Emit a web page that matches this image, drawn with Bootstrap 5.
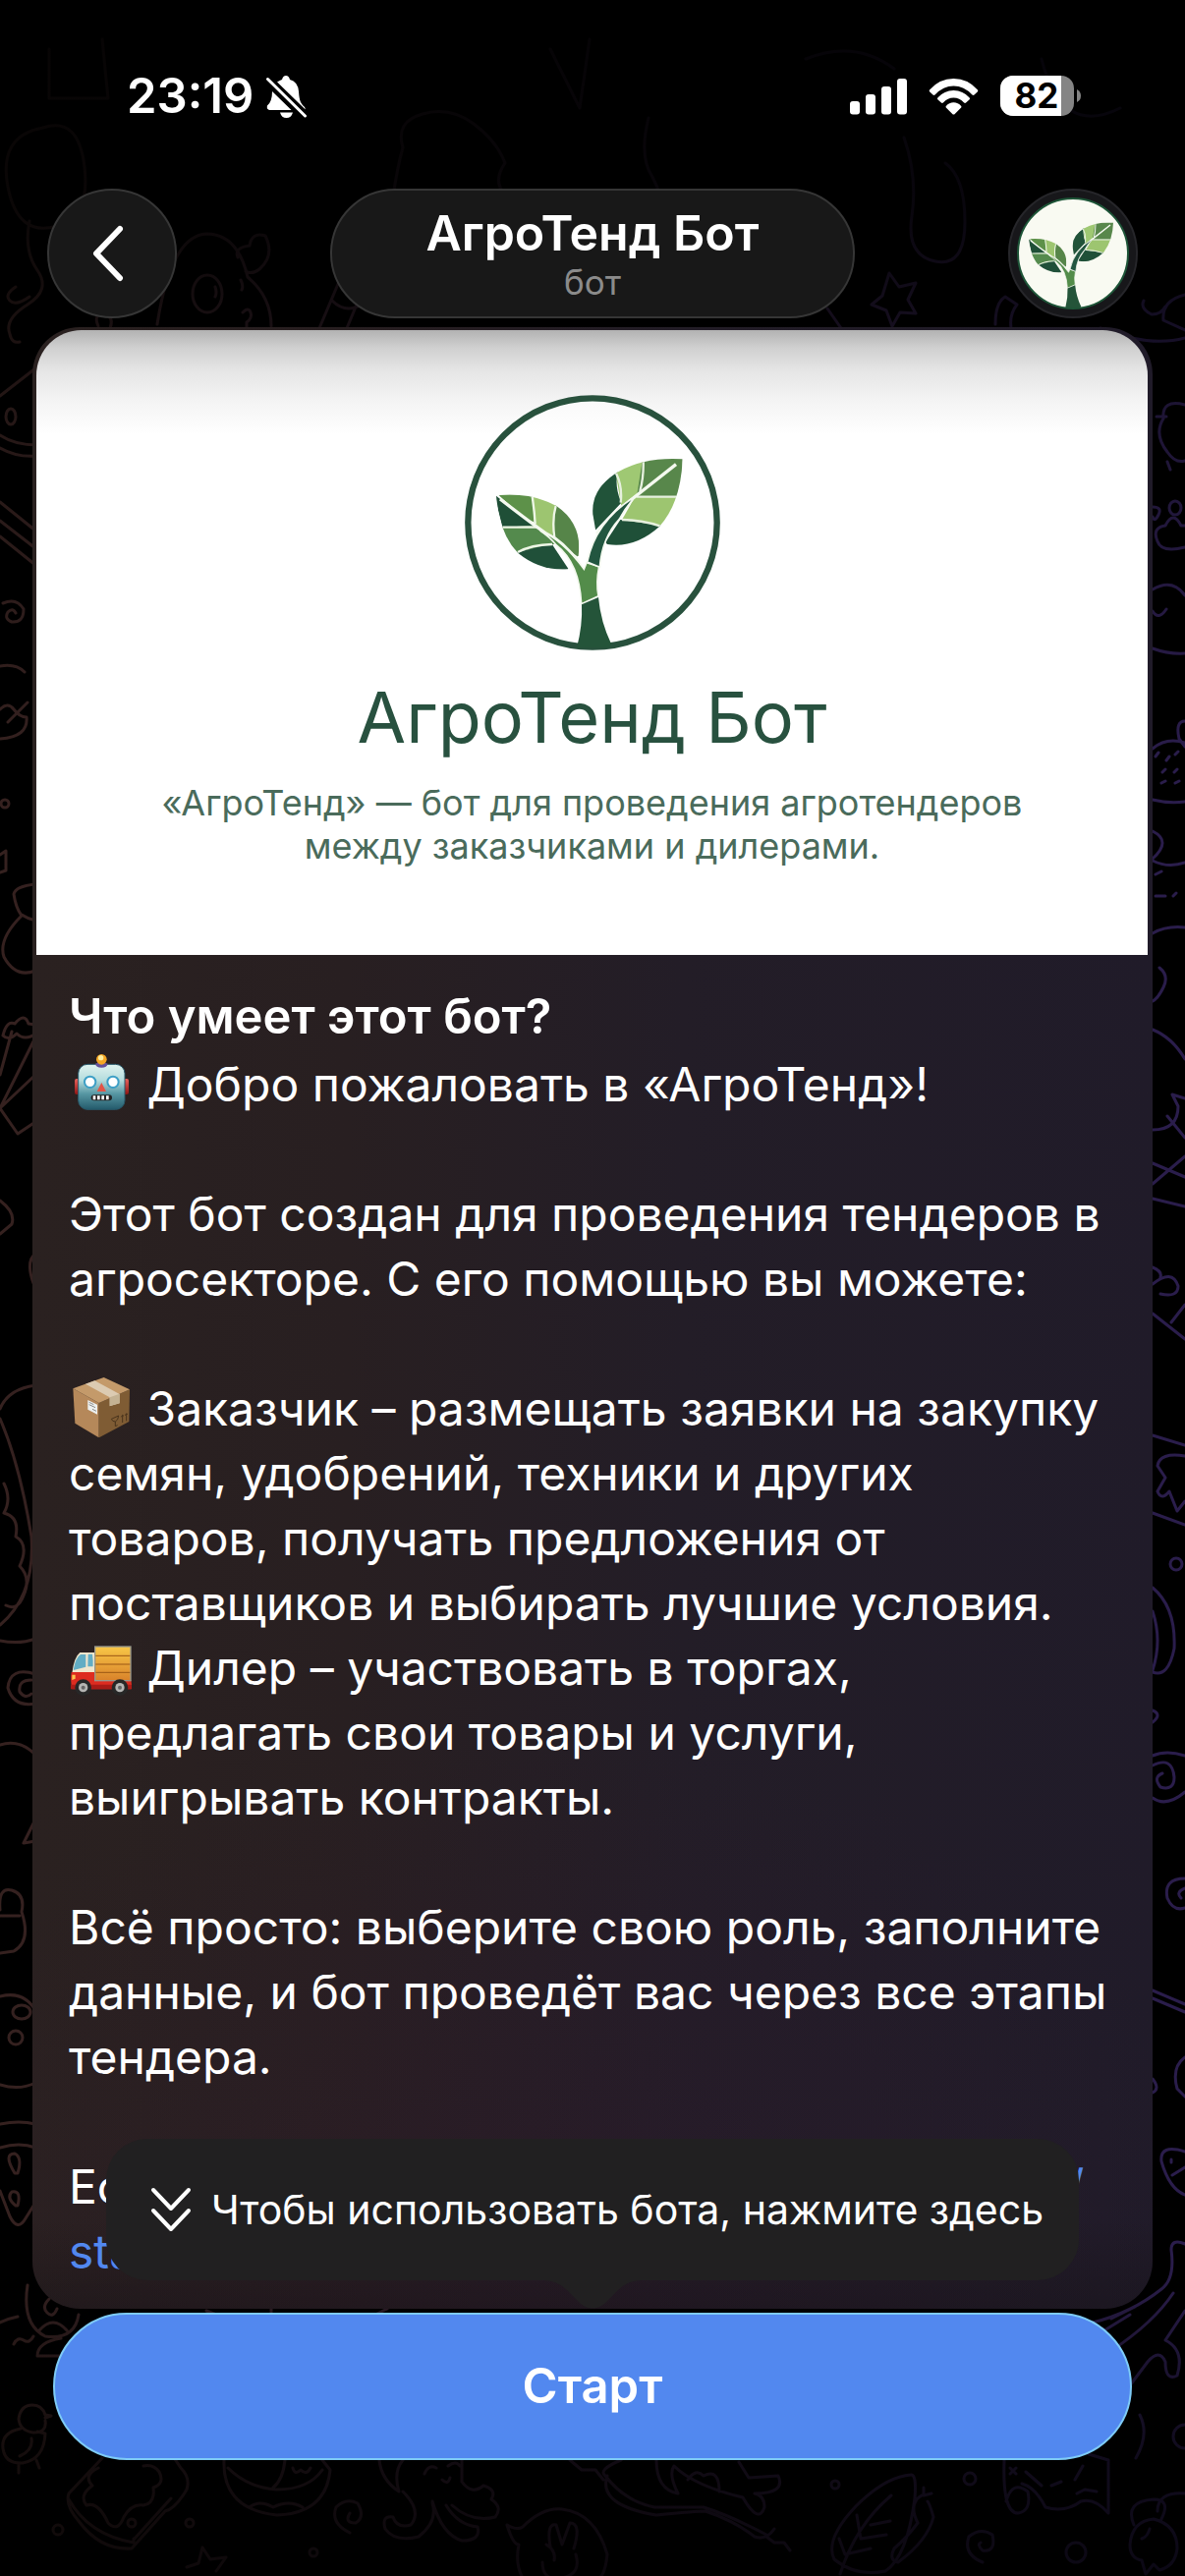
<!DOCTYPE html>
<html lang="ru" data-bs-theme="dark">
<head>
<meta charset="utf-8">
<meta name="viewport" content="width=device-width, initial-scale=1">
<title>АгроТенд Бот</title>
<link href="https://cdn.jsdelivr.net/npm/bootstrap@5.3.0/dist/css/bootstrap.min.css" rel="stylesheet">
<style>
  body { background: #000; color: #fff; font-family: Inter, "Noto Sans", sans-serif; font-size: 48px; line-height: 66px; }
  svg { display: block; flex: none; }
  .wallpaper { position: absolute; top: 0; left: 0; width: 100%; height: 100%; fill: none; stroke-width: 3; stroke-linecap: round; stroke-linejoin: round; }

  .status-row { padding: 68px 106px 64px 129px; font-size: 49px; line-height: 60px; }
  .status-icons { gap: 22px; }
  .clock { gap: 12px; }

  .chat-head { padding: 0 48px; height: 132px; }
  .glass { background: #181818; border: 2px solid #363636; }
  .glass:hover { background: #222; }
  .round-btn { width: 132px; height: 132px; }
  .avatar { border-color: #26262a; background: #17171a; }
  .title-pill { width: 534px; }
  .chat-title { font-size: 50px; line-height: 58px; }
  .chat-kind { font-size: 35px; line-height: 42px; color: #8b8b8b; }

  .intro { margin: 9px 33px 0; padding: 3px 5px 0 4px; border: 0; border-radius: 48px; color: #fff;
    background:
      linear-gradient(0deg, rgba(20, 16, 20, .4), transparent 90px),
      radial-gradient(700px 500px at 45% 96%, rgba(48, 22, 46, .3), transparent),
      linear-gradient(90deg, #2a2120, #281f21 28%, #231d27 58%, #201b29); }
  .poster { height: 636px; padding-top: 66px; border-radius: 46px 46px 0 0;
    background: linear-gradient(180deg, #b2b2b2, #d0d0d0 18px, #e6e6e6 42px, #f3f3f3 70px, #fff 106px); }
  .poster-title { font-size: 72px; line-height: 88px; margin: 24px 0 21px; color: #28513f; }
  .poster-text { font-size: 36px; line-height: 44px; color: #4a6b5b; }
  .intro-text { padding: 30px 30px 25px 33px; }
  .intro-text h2 { font-size: 49px; line-height: 66px; margin-bottom: 3px; color: #fff; }
  .intro-text p { margin-bottom: 66px; }
  .intro-text a { color: #5288ef; }
  .emoji { display: inline-block; width: 66px; height: 62px; vertical-align: -12px; }

  .start-bar { padding: 4px 54px 0; }
  .start-btn { height: 150px; font-size: 49px; color: #fff; background: #5288ef; border: 2px solid #7ecbf6; }
  .start-btn:hover { color: #fff; background: #4a7fe6; border-color: #7ecbf6; }
  .hint { position: absolute; bottom: calc(100% + 29px); left: 108px; right: 108px; height: 144px; padding: 0 36px 0 45px;
    gap: 20px; border-radius: 42px; font-size: 41px; background: #212021; }
  .hint-tail { position: absolute; top: 100%; left: 50%; margin-left: -50px; }
</style>
</head>
<body>
<div class="position-relative min-vh-100 overflow-hidden">

  <svg class="wallpaper" viewBox="0 0 1206 2622" preserveAspectRatio="xMidYMid slice" aria-hidden="true">
    <defs>
      <linearGradient id="ink" gradientUnits="userSpaceOnUse" x1="0" y1="0" x2="1206" y2="0">
        <stop offset="0" stop-color="#35211f"/><stop offset=".5" stop-color="#2b1b2e"/><stop offset="1" stop-color="#2a1d4c"/>
      </linearGradient>
      <linearGradient id="shade" x1="0" y1="0" x2="0" y2="1">
        <stop offset="0" stop-color="#000" stop-opacity=".88"/><stop offset=".08" stop-color="#000" stop-opacity=".8"/>
        <stop offset=".16" stop-color="#000" stop-opacity=".3"/><stop offset=".3" stop-color="#000" stop-opacity="0"/>
        <stop offset=".88" stop-color="#000" stop-opacity="0"/><stop offset=".95" stop-color="#000" stop-opacity=".6"/>
        <stop offset="1" stop-color="#000" stop-opacity=".72"/>
      </linearGradient>
    </defs>
    <g stroke="url(#ink)">
      <!-- top -->
      <path d="M44 130q36-12 42 40t-28 60q-40 12-50-40t36-60M30 225q-6 30 8 50t-10 35-18 30q2 10 10 8"/>
      <path d="M160 330q14-90 50-92 32 0 42 44 24 20 24 50M242 262q-4-10 12-12 2-14 16-10 10 20-6 34-8 6-14 2"/>
      <ellipse cx="211" cy="299" rx="15" ry="19"/><path d="M219 292q2 6 0 10M245 285q3 6 1 10M247 318q6-6 8 0t-4 10v8M325 334l22-52M353 334l10-24M338 306q12 12 26 6"/>
      <path d="M100 332q-6-14 8-12 8 4 4 14"/>
      <path d="M905 278l10 14 17-4-8 17 8 14-16-1-8 14-6-16-15-6 11-9zM1013 330q0-22 10-28l12 8q-8 10-6 24M842 314l14 20"/>
      <path d="M410 150q-8-26 20-34t52 10 32 40q-14 20 2 34-20 26-56 20-44 4-60-20 4-28 10-50M560 50l30 60 10-70M50 50v50h60l-6-60"/>
      <path d="M660 120q-10 40 4 60 16 30 6 60M920 140q14 40 8 80t24 46 30-40-20-60M820 60q50-20 90 10M1060 60q20 80 80 50"/>
      <!-- left edge -->
      <path d="M30 302q-14 10-20 4t6-14M0 403l36-28M0 443q15 10 38 10M0 456q18 10 38 8M0 511l36 29M0 530l36 28M0 546l36 29M0 678q16-3 25 6"/>
      <ellipse cx="11" cy="424" rx="5" ry="8"/>
      <path d="M3 614q14-6 21 6 0 14-12 13-8-3-4-10 5-5 8 1M0 722q8-8 14 0t13 8q2 20-27 22M8 735l20-20M0 870l6-4v20l-6 2"/>
      <circle cx="5" cy="818" r="4"/>
      <path d="M36 900q-20 2-22 10 2 14 8 22-24 24-18 42 12 22 32 14M36 937q-8-2-14-6"/>
      <path d="M3 1054q4-16 12-12 10-12 14 0 10 0 8 10-12 8-20 0-8 8-14 2M12 1050l-12 44M34 1060l-34 68M34 1096l-34 32 18 26 18-12M0 1222q16 12 12 24l-12 10M36 1276q-10 8-2 30"/>
      <path d="M36 1410q-28 4-36 24M0 1444q20 46 32 120 4 60-32 90M4 1510q8 16 0 30 16 4 12 24 14 8 4 30 12 12 4 30-6 16-18 10M0 1670q20 4 36-2"/>
      <path d="M36 1704q-26-8-28 14 6 20 28 16M32 1710q-14 0-12 12 6 8 12 2M0 1776q20-6 36 10M36 1852l-12 24 12-2M0 1944q-2-24 12-20 14 4 10 22 10 30-8 40l-14 2M0 1950h20"/>
      <path d="M0 2032q24-6 36 14M0 2122q20 6 36-2M0 2162q20-4 36 0M0 2186q20-6 36 0M0 2230l10 26q8 16 16 2l10-16"/>
      <path d="M15 2212q-12-20 0-20 8 4 3 20zM16 2245q-10-8-4-14 10-2 6 14z"/><ellipse cx="22" cy="2048" rx="9" ry="7"/><ellipse cx="16" cy="2074" rx="7" ry="7"/>
      <!-- right edge -->
      <path d="M1164 306q-4 8 8 14 10 0 14-8M1206 300q-24 6-22 26l22 10M1120 334q50 20 86 10"/>
      <path d="M1206 412q-24-6-22 14-10 16 4 34 8 12 18 9M1188 470l3 8M1177 424h10"/>
      <path d="M1178 551q-6-14 8-16 8-16 16 0h4M1178 551q4 12 28 6M1173 516q10 0 6 8t-6 2"/><ellipse cx="1196" cy="517" rx="6" ry="7"/>
      <path d="M1173 600q20-12 33 6M1173 622q6 10 14-2M1173 660q16 6 33 5M1173 762q14-12 33-6M1206 734q-10 0-6 18l6 8M1173 814q16 4 33 2M1179 766l-3 4M1190 770l-3 4M1186 783l-3 3M1198 783l-3 3M1182 797l4-2M1196 797l4-2M1196 768l3-3"/>
      <path d="M1173 846q20 10 0 28M1173 876q16 8 33 2M1176 912h10M1176 890l6-3M1194 912l3-3M1173 950q14-8 33-6M1180 985q10 8 4 20t-11 14M1173 1048q20 8 33 30M1173 1150q26 0 26-24l-6-12 13 4M1188 1136l18 22M1173 1205l33-28M1173 1184l33 14M1173 1220l33 8M1173 1290q10 4 8 10"/>
      <path d="M1173 1307q20-16 26 2 0 12-18 8M1173 1337l33 26M1192 1346l14-18M1173 1461l33 10M1173 1540l33 12M1206 1482q-26-4-28 10l8 12-8 14q4 10 12 0l8 20 8-10"/>
      <circle cx="1197" cy="1592" r="6"/><path d="M1173 1616q24 20 22 62-6 30-22 24M1173 1640q10 30 0 60M1173 1741q10 4 0 12M1173 1787q14-6 33 0M1173 1830q14 10 33-6M1173 1797q20-10 22 12 0 14-14 10-8-10 2-14"/>
      <path d="M1206 1912q-22 0-18 20 6 14 18 10M1206 1922q-10 4-4 10M1173 2026l33 14M1173 2034l33 14M1206 2094q-14 10-8 32l8 8M1173 2116q8 10 0 14M1206 2190q-26-8-24 10 8 28 24 34M1192 2198v3M1193 2214l13-8"/>
      <path d="M1206 2284q-14-6-14 6 4 30-10 40-30 24-70 34-20 0-10 16 14 10 20-10M1194 2334q-20 30-62 58M1206 2352l-20 30q20 10 12 36-12 6-12-14-6-14-18 0l-18 24M1155 2348l-24 12"/>
      <!-- bottom -->
      <path d="M0 2364q8-4 18-6M28 2326q-6 40 18 52 30 4 34-22M50 2340q-8 8-2 14t10-4M40 2372q14-16 28 0M14 2386q4-8 10-4t10-4M62 2380q-24 4-24 18h26M210 2352l10 4M276 2350v6M382 2356l12-6M1150 2356l-26 16"/>
      <path d="M46 2464q2 12-12 12-14-2-15-14 2-14 14-14 10 0 13 10l6 1-6 2M21 2472q-20 4-18 20t20 15q22-4 23-30l-8-2M32 2482q2 12-12 18M19 2508v9M37 2504l3 8"/>
      <path d="M104 2502l-34 36q-4 12 10 28 22 30 54 28l34-38q10-2 22-22 4-12-6-22l-8-12M70 2544q20 36 66 44v-4M136 2585l38-42M100 2512q-16 8-6 18-14 10-6 20 12-4 22 18 10 10 16-6 8-14 20-12 12-2 10-18 12-4 6-16-6-8-16-6"/>
      <circle cx="134" cy="2568" r="4"/><circle cx="59" cy="2575" r="5"/><circle cx="193" cy="2568" r="4"/><circle cx="319" cy="2598" r="4"/>
      <path d="M228 2504q-2 50 54 56 50-2 54-46l-8-10M232 2512q20 20 50 22 32 0 46-20M254 2552q10-8 24 0 16-8 30 0M290 2504q-2 20-12 28M298 2512q2 8 8 2 6 6 10-2"/>
      <path d="M356 2578q-20-10-14-26 10-10 22-4 8 14-2 20-12 0-6-10M386 2504q2 20 20 32-6-20 4-32M410 2536q20 20 8 34-14 4-18-8-12-2-8 12 10 14 34 8 20-16 14-34M440 2546q10 34 30 40 20 0 16-14-20-2-32-22M470 2504v22q10 14 22 4 14 4 8 14 12 8 4 18-24 6-44-12M432 2518q4-10 12-6M450 2524q6 6 8-2M456 2510q8-6 12 0"/>
      <path d="M206 2593l8 12 16-2-10 14M206 2593l-4 16-12 4M516 2570q10 6 16 2 20-20 40-18 34 4 46 46-2 20-8 24M516 2570q6 20 12 20-4 20 4 34M560 2592q-4-24 6-22l6 20 8-22q12 0 4 26M556 2590q10 6 8 16M552 2608q0 20 20 16t14-24"/>
      <path d="M580 2504l12 10h14l8 10M618 2520q-10 30 50 40 40-4 50-4 30 10 50 26 12 4 20-8M632 2504q-24 10-16 16 20 26 50 32l50 0q26 8 64 28M668 2504q0 30 22 34-10-20-4-28 20 20 70 32 16 28 22 10 0-12-10-14 32 0 24-18l-30 2-10-16M700 2524q8-12 16-4 16-8 16 16M780 2582l8 6 10 0 6 8"/>
      <path d="M927 2519q6-1 4 24-8 60-30 74-30 6-52-12-10-20 22-54 30-30 56-32M855 2620q16-50 52-80M872 2560l4 24 26-4M886 2570l20-4M854 2584l6 16 26-6M938 2540q-14 8-4 28-12 16-24 26-6 12 4 14 30-22 36-46-4-14-6-16M940 2540l8-2M940 2540v-8"/>
      <circle cx="850" cy="2529" r="4"/><circle cx="987" cy="2523" r="6"/><circle cx="1095" cy="2598" r="10"/><circle cx="1206" cy="2480" r="12"/>
      <path d="M1000 2608q-20-8-14-26 12-10 24-2 4 18-10 16-6-6-2-8M1022 2504q-2 54 14 54 14-2 10-22-16-12-22 10M1040 2528q14 4 24 24 20 6 36-6 14-4 28 12v-54l-20-6M1034 2512l-6 6M1028 2512l6 6M1044 2516l16 14M1070 2530l10-4M1094 2524l8-14M1096 2538l8-4 12 2M1160 2458q10 20-4 44"/>
      <path d="M1154 2570q-10-24 20-26 18 0 8 20M1178 2556q0-20 28-18M1150 2590q2-24 24-26 24 6 24 30-2 18-18 22l-6-6-8 10-4-14q-12-2-12-16M1170 2574q-2 8-8 10"/>
    </g>
    <rect width="1206" height="2622" fill="url(#shade)"/>
  </svg>

  <div class="position-relative">
    <div class="status-row d-flex justify-content-between align-items-center">
      <div class="clock d-flex align-items-center fw-semibold">
        <span>23:19</span>
        <svg width="42" height="44" viewBox="0 0 42 44" aria-label="Без звука">
          <path fill="#fff" d="M12 7.500q3-2 5-2.500Q18 1 21 1t4 4q8 2 9 12 .5 8 2 11 1.500 3 4 5 .8 1 .6 2.500zM7 17l19.500 19H4q-3-1-2-4.500 5-4 5-14.500M15 38.500h13q-1.500 5.500-6.500 5.500T15 38.500"/>
          <path stroke="#000" stroke-width="7" d="M3 4l39 38"/><path stroke="#fff" stroke-width="3" stroke-linecap="round" d="M2.500 4.500l38 37.500"/>
        </svg>
      </div>
      <div class="status-icons d-flex align-items-center">
        <svg width="58" height="38" viewBox="0 0 58 38" fill="#fff" aria-label="Сигнал">
          <rect y="24" width="10" height="13.500" rx="3"/><rect x="16" y="17" width="10" height="20.500" rx="3"/><rect x="32" y="9" width="10" height="28.500" rx="3"/><rect x="48" y="1" width="10" height="36.500" rx="3"/>
        </svg>
        <svg width="51" height="38" viewBox="0 0 51 38" fill="#fff" aria-label="Wi-Fi">
          <path d="M1 12.500Q11 1 25.500 1T50 12.500q.6 1 0 1.800L46.500 17.500q-1 .8-2 0Q36 8.500 25.500 8.500T6.500 17.500q-1 .8-2 0L1 14.300q-.6-.8 0-1.800M9.300 20.500Q16 13 25.500 13t16.200 7.500q.7 1 0 1.700l-3.600 3.400q-1 .8-2 0-4.600-5-10.600-5t-10.600 5q-1 .8-2 0L9.300 22.200q-.7-.7 0-1.700M17.800 29q3.200-3.700 7.700-3.700t7.700 3.700q.6.800 0 1.500l-6.700 6.700q-1 .8-2 0l-6.700-6.700q-.6-.7 0-1.500"/>
        </svg>
        <svg width="82" height="42" viewBox="0 0 82 42" aria-label="Заряд 82%">
          <clipPath id="cell"><rect width="75" height="41" rx="13"/></clipPath>
          <g clip-path="url(#cell)"><rect width="75" height="41" fill="#848484"/><rect width="62" height="41" fill="#fff"/></g>
          <path fill="#848484" d="M78 14q4 2 4 6.500T78 27z"/>
          <text x="37" y="33" text-anchor="middle" font-size="35" font-weight="700" fill="#000">82</text>
        </svg>
      </div>
    </div>

    <header class="chat-head d-flex justify-content-between">
      <button type="button" class="btn glass round-btn rounded-circle p-0 d-flex align-items-center justify-content-center" aria-label="Назад">
        <svg width="40" height="58" viewBox="0 0 40 58" fill="none" stroke="#fff" stroke-width="6" stroke-linecap="round" stroke-linejoin="round"><path d="M28 4L4 29l24 25"/></svg>
      </button>
      <button type="button" class="btn glass title-pill rounded-pill p-0 d-flex flex-column align-items-center justify-content-center">
        <span class="chat-title fw-semibold text-white">АгроТенд Бот</span>
        <span class="chat-kind">бот</span>
      </button>
      <button type="button" class="btn glass avatar round-btn rounded-circle p-0 d-flex align-items-center justify-content-center" aria-label="Профиль бота">
        <svg width="114" height="114" viewBox="0 0 114 114">
          <circle cx="57" cy="57" r="56" fill="#f9faf2" stroke="#1d5437" stroke-width="2"/>
          <use href="#sprout" transform="translate(-17.500 -14) scale(.151)"/>
        </svg>
      </button>
    </header>

    <main class="card intro">
      <div class="poster d-flex flex-column align-items-center text-center">
        <svg width="260" height="260" viewBox="100 66 780 780" role="img" aria-label="Логотип АгроТенд">
          <circle cx="490" cy="456" r="380" fill="#fff" fill-opacity=".5" stroke="#28513d" stroke-width="19"/>
          <g id="sprout">
            <clipPath id="leafL"><path d="M196 373Q300 362 380 405 460 460 447 556L415 598Q330 604 262 548 205 490 196 373"/></clipPath>
            <clipPath id="leafR"><path d="M765 262Q650 255 570 300 485 350 491 430L500 482 535 522Q620 535 694 468 760 395 765 262"/></clipPath>
            <g clip-path="url(#leafL)">
              <path fill="#5d9149" d="M190 360h115l10 95-30-10z"/><path fill="#9dc570" d="M305 365l75 30-8 110-60-45z"/><path fill="#568549" d="M378 400l90 60-10 110-90-70z"/>
              <path fill="#1f4f37" d="M190 370l125 95-100 5z"/><path fill="#548a4d" d="M210 470l110-5 60 55-130 28z"/><path fill="#205039" d="M255 548l110-28 60 90-60 10z"/>
              <path fill="none" stroke="#eef6e6" stroke-width="7" d="M305 370q8 50 10 90M378 405q-12 40-4 98M215 470h105M262 546q40-22 105-24"/>
            </g>
            <g clip-path="url(#leafR)">
              <path fill="#215339" d="M570 290q-16 50 8 105l-85 90-20-100z"/><path fill="#9fc873" d="M560 300l90-40-12 100-60 45z"/><path fill="#58874b" d="M645 250h130l-20 125H625z"/>
              <path fill="#9dc570" d="M620 377h130l-40 90-130-20z"/><path fill="#1f5038" d="M575 447l130 18-90 70-90-12z"/>
              <path fill="none" stroke="#e6f0de" stroke-width="7" d="M562 305q20 40 14 90M645 265q2 50-10 95M625 377h130M580 447q60 0 118 20"/>
            </g>
            <path fill="none" stroke="#f4f9ef" stroke-width="10" d="M208 384q90 70 140 105 55 25 100 90M745 278L622 375Q540 440 503 490"/>
            <path fill="#538c4a" stroke="#f4f9ef" stroke-width="5" d="M330 480Q400 510 464 598L472 578 510 590Q500 640 508 680L456 704Q450 580 380 525 360 500 330 480"/>
            <path fill="#225640" stroke="#f4f9ef" stroke-width="5" d="M622 375Q500 450 474 576L512 592Q520 500 572 445 590 410 622 375"/>
            <path fill="#245439" d="M457 706L508 684Q515 760 548 828L540 838H442Q460 770 457 706"/>
          </g>
        </svg>
        <h1 class="poster-title fw-normal">АгроТенд Бот</h1>
        <p class="poster-text mb-0">«АгроТенд» — бот для проведения агротендеров<br>между заказчиками и дилерами.</p>
      </div>

      <div class="intro-text">
        <h2 class="fw-semibold">Что умеет этот бот?</h2>
        <p><svg class="emoji" viewBox="150 93 198 186" role="img" aria-label="Робот">
          <defs><linearGradient id="steel" x1="0" y1="0" x2="0" y2="1"><stop offset="0" stop-color="#e0f3ef"/><stop offset=".35" stop-color="#b5dcdd"/><stop offset=".65" stop-color="#5797a3"/><stop offset="1" stop-color="#235a6b"/></linearGradient>
          <linearGradient id="ear" x1="0" y1="0" x2="0" y2="1"><stop offset="0" stop-color="#e8605a"/><stop offset="1" stop-color="#8e1514"/></linearGradient></defs>
          <rect x="168" y="174" width="20" height="48" rx="6" fill="url(#ear)"/><rect x="313" y="174" width="20" height="48" rx="6" fill="url(#ear)"/>
          <rect x="179" y="130" width="142" height="138" rx="28" fill="url(#steel)" stroke="#28586a" stroke-width="3"/>
          <path d="M231 128q19-10 38 0-2 12-19 12t-19-12" fill="#65509a"/><circle cx="250" cy="115" r="16" fill="#f5a623"/><circle cx="248" cy="110" r="8" fill="#fff0a0"/>
          <circle cx="215" cy="184" r="17" fill="#fff" stroke="#3d9fc6" stroke-width="6"/><circle cx="285" cy="184" r="17" fill="#fff" stroke="#3d9fc6" stroke-width="6"/>
          <path d="M250 186l14 27h-28z" fill="#e25447"/><rect x="218" y="223" width="64" height="18" rx="9" fill="#252323"/><path d="M228 226v12M241 226v12M254 226v12M268 226v12" stroke="#fff" stroke-width="8"/>
        </svg> Добро пожаловать в «АгроТенд»!</p>
        <p>Этот бот создан для проведения тендеров в агросекторе. С его помощью вы можете:</p>
        <p class="mb-0"><svg class="emoji" viewBox="150 63 198 186" role="img" aria-label="Коробка">
          <path d="M163 100l79 44v106l-73-44z" fill="#b5885a"/><path d="M242 144l94-41-2 98-92 49z" fill="#7f5c34"/><path d="M163 100l94-34 79 37-94 41z" fill="#c49a6a"/>
          <path d="M201 86l28-10 76 41v28l-30 9v-27z" fill="#dccbb2"/><path d="M275 127l30-11v29l-30 8z" fill="#c4b293"/>
          <path d="M208 135l29 14v30l-29-15z" fill="#edf0ef"/><path d="M212 142l14 7M212 149l19 9M222 163l12 6" stroke="#8d8d8d" stroke-width="3"/>
          <path d="M280 193l22-10q-1 14-10 18v14l7-3M292 201q-9 0-12-8M314 204v-22m-4 5l4-6 4 3M326 199v-22m-4 5l4-6 4 3" fill="none" stroke="#4a341c" stroke-width="3"/>
        </svg> Заказчик – размещать заявки на закупку семян, удобрений, техники и других товаров, получать предложения от поставщиков и выбирать лучшие условия.</p>
        <p><svg class="emoji" viewBox="150 855 198 186" role="img" aria-label="Грузовик">
          <defs><linearGradient id="cargo" x1="0" y1="0" x2="0" y2="1"><stop offset="0" stop-color="#f8c747"/><stop offset="1" stop-color="#d9822a"/></linearGradient></defs>
          <path d="M184 906h48v64h-72q6-50 24-64" fill="#f1e6cc"/><path d="M186 912h16v38l-38 10q6-38 22-48" fill="#62adc4"/><path d="M209 911h13q3 20 2 38h-16z" fill="#62adc4"/>
          <path d="M158 966h70l6 24h106q4 14 0 28H160q-6-28-2-52" fill="#dd2c20"/><path d="M156 1004h186v14H156z" fill="#a91b16"/><path d="M160 974h10v12l-10 4z" fill="#ffc34d"/>
          <rect x="230" y="888" width="109" height="104" fill="url(#cargo)" stroke="#96968c" stroke-width="4"/><path d="M232 916h105M232 942h105M232 967h105" stroke="#9a5714" stroke-width="3"/>
          <circle cx="194" cy="1013" r="25" fill="#272727"/><circle cx="306" cy="1013" r="25" fill="#272727"/><circle cx="194" cy="1013" r="14" fill="#b5b5b3"/><circle cx="306" cy="1013" r="14" fill="#b5b5b3"/><circle cx="194" cy="1013" r="6" fill="#666"/><circle cx="306" cy="1013" r="6" fill="#666"/>
        </svg> Дилер – участвовать в торгах, предлагать свои товары и услуги, выигрывать контракты.</p>
        <p>Всё просто: выберите свою роль, заполните данные, и бот проведёт вас через все этапы тендера.</p>
        <p class="mb-0">Если появились вопросы – посетите <a class="text-decoration-none" href="#">https://<wbr>sta</a></p>
      </div>
    </main>

    <footer class="start-bar position-relative">
      <div class="hint d-flex align-items-center text-nowrap">
        <svg width="42" height="50" viewBox="0 0 42 50" fill="none" stroke="#fff" stroke-width="4" stroke-linecap="round" stroke-linejoin="round"><path d="M3 5l18 19L39 5M3 26l18 19 18-19"/></svg>
        <span>Чтобы использовать бота, нажмите здесь</span>
        <svg class="hint-tail" width="100" height="29" viewBox="0 0 100 29" fill="#212021"><path d="M0 0q14 0 24 10l14 14q12 9 24 0l14-14Q86 0 100 0z"/></svg>
      </div>
      <button type="button" class="btn start-btn rounded-pill w-100 fw-semibold">Старт</button>
    </footer>
  </div>
</div>
<script src="https://cdn.jsdelivr.net/npm/bootstrap@5.3.0/dist/js/bootstrap.bundle.min.js"></script>
</body>
</html>
